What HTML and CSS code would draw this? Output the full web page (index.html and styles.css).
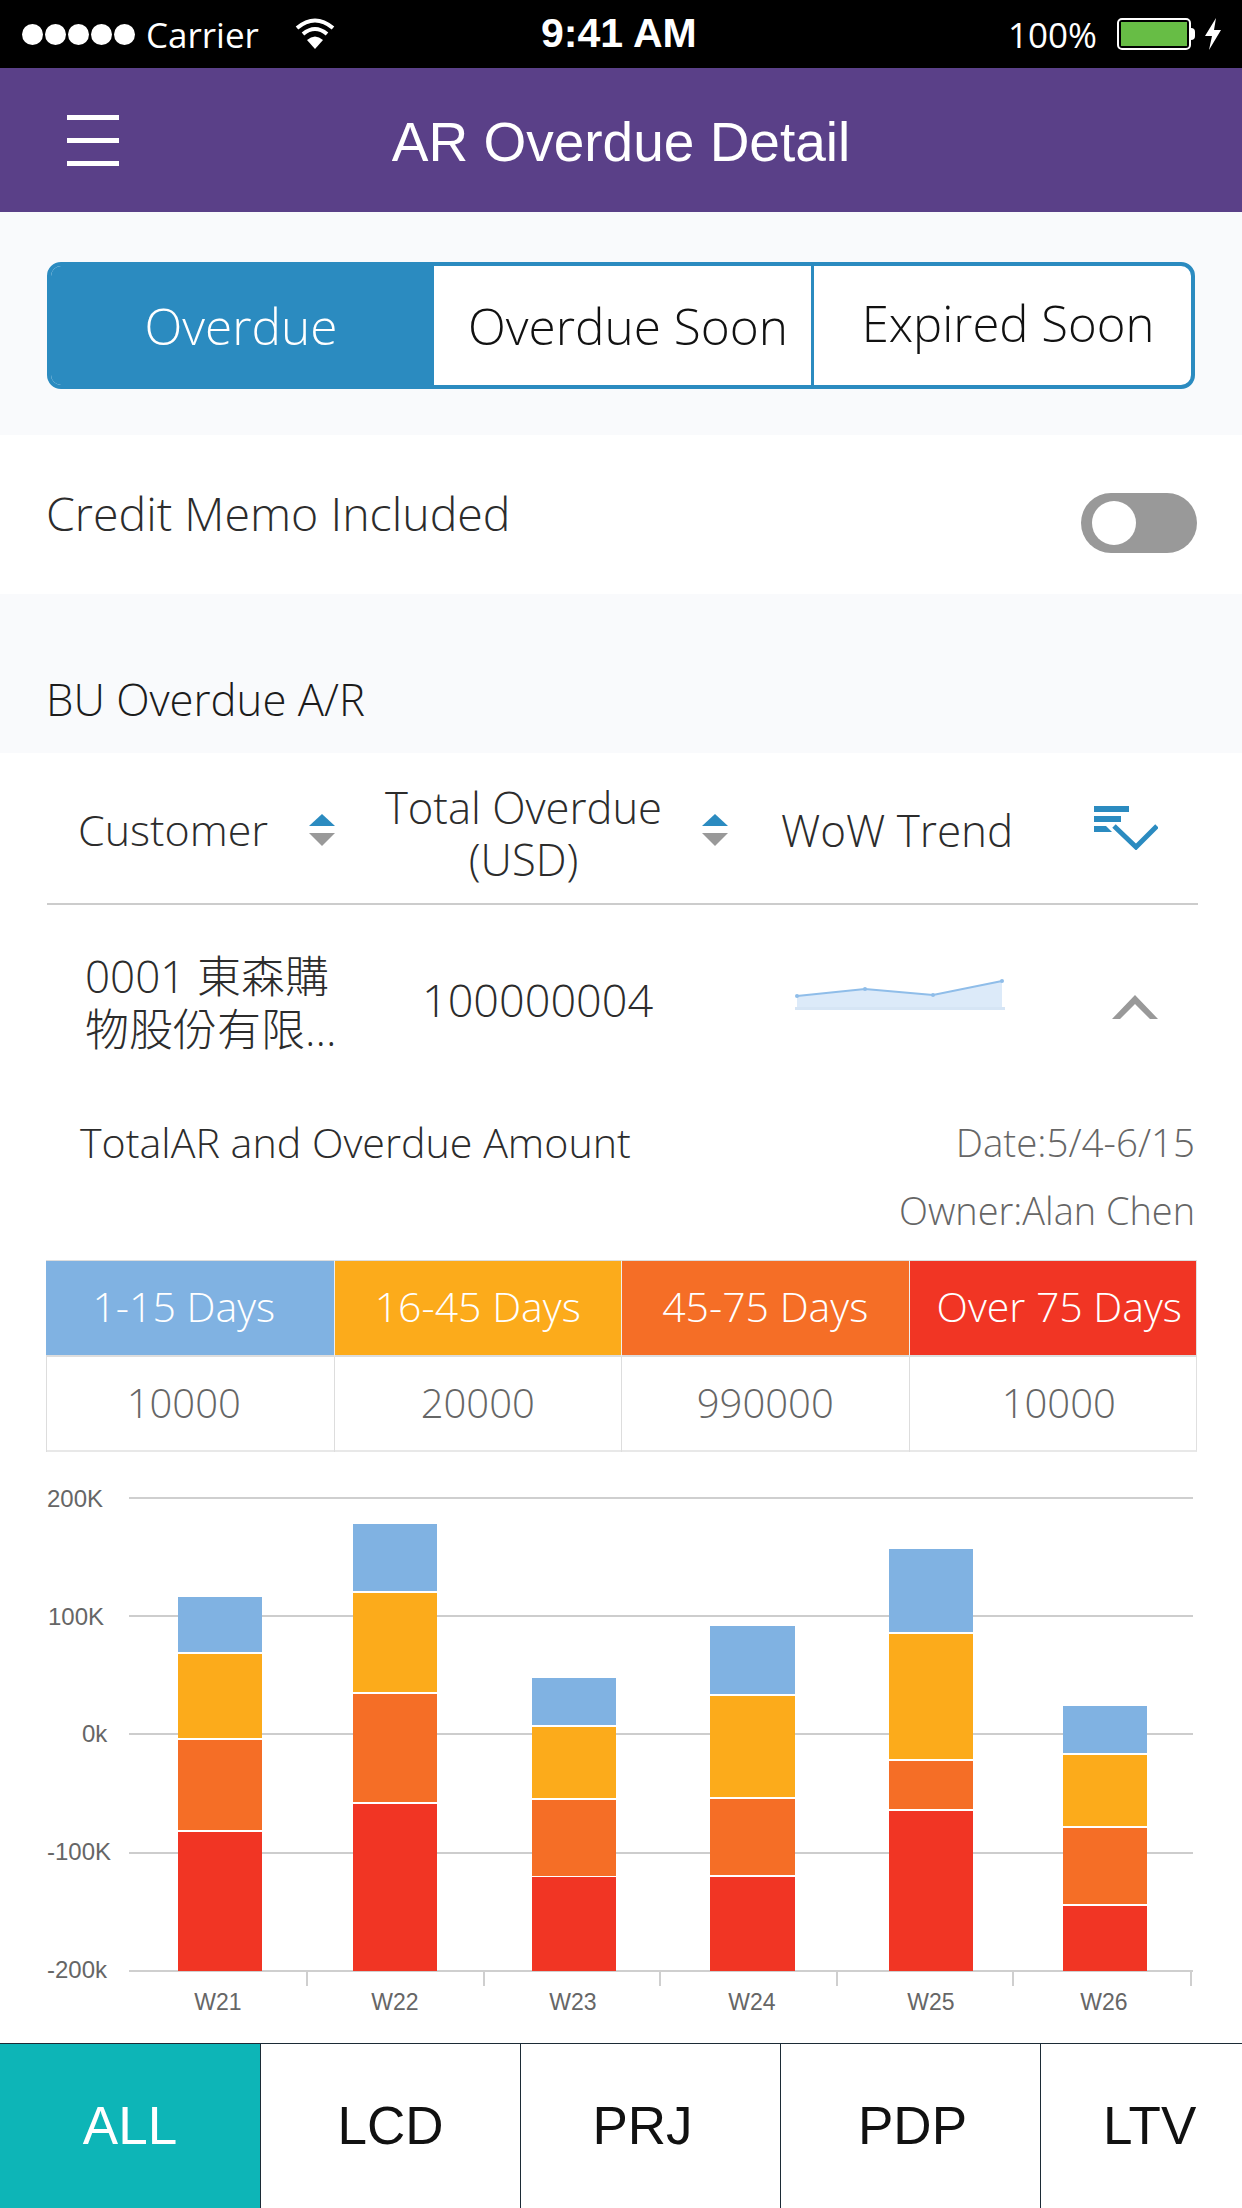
FILE: index.html
```html
<!DOCTYPE html>
<html lang="en">
<head>
  <meta charset="UTF-8">
  <title>AR Overdue Detail</title>
  <link rel="stylesheet" href="styles.css">
</head>
<body>
  <div class="page">
    <!-- status bar -->
    <div class="status">
      <div class="status-left">
        <span class="dots"><i></i><i></i><i></i><i></i><i></i></span>
        <span class="carrier">Carrier</span>
        <svg class="wifi" width="40" height="32" viewBox="0 0 40 32">
          <path d="M2 10 Q20 -5 38 10" fill="none" stroke="#fff" stroke-width="4"/>
          <path d="M8 16 Q20 6 32 16" fill="none" stroke="#fff" stroke-width="4"/>
          <path d="M20 31 L12 22 Q20 15 28 22 Z" fill="#fff"/>
        </svg>
      </div>
      <div class="clock">9:41 AM</div>
      <div class="status-right">
        <span class="pct">100%</span>
        <span class="battery"><b></b></span>
        <span class="nub"></span>
        <svg class="bolt" width="18" height="32" viewBox="0 0 18 32"><path d="M12 0 L1 18 H8 L5 32 L17 12 H10 Z" fill="#fff"/></svg>
      </div>
    </div>

    <!-- nav -->
    <header class="nav">
      <div class="burger"><i></i><i></i><i></i></div>
      <h1>AR Overdue Detail</h1>
    </header>

    <section class="seg-wrap">
      <div class="seg">
        <div class="seg-item active">Overdue</div>
        <div class="seg-item">Overdue Soon</div>
        <div class="seg-item expired">Expired Soon</div>
      </div>
    </section>

    <section class="memo">
      <span>Credit Memo Included</span>
      <div class="toggle"><i></i></div>
    </section>

    <section class="bu">BU Overdue A/R</section>

    <section class="list">
      <div class="thead">
        <div class="th th-customer">Customer</div>
        <svg class="sort" width="26" height="32" viewBox="0 0 26 32"><path d="M13 0 L26 12 H0 Z" fill="#2b8bc0"/><path d="M0 19 H26 L13 32 Z" fill="#999"/></svg>
        <div class="th th-total">Total Overdue<br>(USD)</div>
        <svg class="sort" width="26" height="32" viewBox="0 0 26 32"><path d="M13 0 L26 12 H0 Z" fill="#2b8bc0"/><path d="M0 19 H26 L13 32 Z" fill="#999"/></svg>
        <div class="th th-trend">WoW Trend</div>
        <svg class="sort-list" width="64" height="44" viewBox="0 0 64 44">
          <rect x="0" y="0" width="35" height="6" fill="#2b8bc0"/>
          <rect x="0" y="10" width="27" height="6" fill="#2b8bc0"/>
          <path d="M0 20 H12 L18 26 H0 Z" fill="#2b8bc0"/>
          <path d="M20 20 L42 41 L63 20" fill="none" stroke="#2b8bc0" stroke-width="5"/>
        </svg>
      </div>

      <div class="row">
        <div class="cust">0001 東森購<br>物股份有限...</div>
        <div class="amount">100000004</div>
        <svg class="spark" width="212" height="32" viewBox="795 980 212 32">
          <path d="M797 997 L865 990 L933 996 L1002 982 V1009 H797 Z" fill="#dceaf9"/>
          <path d="M797 997 L865 990 L933 996 L1002 982" fill="none" stroke="#8fbde9" stroke-width="2"/>
          <rect x="795" y="1008" width="210" height="3" fill="#d6e5f5"/>
          <circle cx="797" cy="997" r="2" fill="#8fbde9"/>
          <circle cx="865" cy="990" r="2" fill="#8fbde9"/>
          <circle cx="933" cy="996" r="2" fill="#8fbde9"/>
          <circle cx="1002" cy="982" r="2" fill="#8fbde9"/>
        </svg>
        <svg class="chev" width="46" height="24" viewBox="0 0 46 24"><path d="M0 24 L23 0 L46 24 H38 L23 9 L8 24 Z" fill="#999"/></svg>
      </div>

      <div class="summary">
        <div class="sum-title">TotalAR and Overdue Amount</div>
        <div class="sum-meta">
          <div class="date">Date:5/4-6/15</div>
          <div class="owner">Owner:Alan Chen</div>
        </div>
      </div>

      <div class="aging">
        <div class="ag-head c1">1-15 Days</div>
        <div class="ag-head c2">16-45 Days</div>
        <div class="ag-head c3">45-75 Days</div>
        <div class="ag-head c4">Over 75 Days</div>
        <div class="ag-val c1v">10000</div>
        <div class="ag-val">20000</div>
        <div class="ag-val">990000</div>
        <div class="ag-val c4v">10000</div>
      </div>

      <svg class="chart" width="1242" height="591" viewBox="0 1452 1242 591">
        <g stroke="#cfcfcf" stroke-width="2">
          <line x1="129" y1="1498" x2="1193" y2="1498"/>
          <line x1="129" y1="1971" x2="1193" y2="1971"/>
          <line x1="307" y1="1971" x2="307" y2="1986"/>
          <line x1="484" y1="1971" x2="484" y2="1986"/>
          <line x1="660" y1="1971" x2="660" y2="1986"/>
          <line x1="837" y1="1971" x2="837" y2="1986"/>
          <line x1="1013" y1="1971" x2="1013" y2="1986"/>
          <line x1="1191" y1="1971" x2="1191" y2="1986"/>
        </g>
        <g stroke="#bdbdbd" stroke-width="1.5">
          <line x1="129" y1="1616" x2="1193" y2="1616"/>
          <line x1="129" y1="1734" x2="1193" y2="1734"/>
          <line x1="129" y1="1853" x2="1193" y2="1853"/>
        </g>
        <g class="axis">
          <text x="47" y="1507">200K</text>
          <text x="48" y="1625">100K</text>
          <text x="82" y="1742">0k</text>
          <text x="47" y="1860">-100K</text>
          <text x="47" y="1978">-200k</text>
        </g>
        <g class="axis week">
          <text x="218" y="2010">W21</text>
          <text x="395" y="2010">W22</text>
          <text x="573" y="2010">W23</text>
          <text x="752" y="2010">W24</text>
          <text x="931" y="2010">W25</text>
          <text x="1104" y="2010">W26</text>
        </g>
        <!-- W21 -->
        <rect class="s1" x="178" y="1597" width="84" height="55"/>
        <rect class="s2" x="178" y="1654" width="84" height="84"/>
        <rect class="s3" x="178" y="1740" width="84" height="90"/>
        <rect class="s4" x="178" y="1832" width="84" height="139"/>
        <!-- W22 -->
        <rect class="s1" x="353" y="1524" width="84" height="67"/>
        <rect class="s2" x="353" y="1593" width="84" height="99"/>
        <rect class="s3" x="353" y="1694" width="84" height="108"/>
        <rect class="s4" x="353" y="1804" width="84" height="167"/>
        <!-- W23 -->
        <rect class="s1" x="532" y="1678" width="84" height="47"/>
        <rect class="s2" x="532" y="1727" width="84" height="71"/>
        <rect class="s3" x="532" y="1800" width="84" height="76"/>
        <rect class="s4" x="532" y="1877" width="84" height="94"/>
        <!-- W24 -->
        <rect class="s1" x="710" y="1626" width="85" height="68"/>
        <rect class="s2" x="710" y="1696" width="85" height="101"/>
        <rect class="s3" x="710" y="1799" width="85" height="76"/>
        <rect class="s4" x="710" y="1877" width="85" height="94"/>
        <!-- W25 -->
        <rect class="s1" x="889" y="1549" width="84" height="83"/>
        <rect class="s2" x="889" y="1634" width="84" height="125"/>
        <rect class="s3" x="889" y="1761" width="84" height="48"/>
        <rect class="s4" x="889" y="1811" width="84" height="160"/>
        <!-- W26 -->
        <rect class="s1" x="1063" y="1706" width="84" height="47"/>
        <rect class="s2" x="1063" y="1755" width="84" height="71"/>
        <rect class="s3" x="1063" y="1828" width="84" height="76"/>
        <rect class="s4" x="1063" y="1906" width="84" height="65"/>
      </svg>
    </section>

    <!-- bottom tabs -->
    <nav class="tabs">
      <div class="tab active">ALL</div>
      <div class="tab">LCD</div>
      <div class="tab prj">PRJ</div>
      <div class="tab pdp">PDP</div>
      <div class="tab last">LTV</div>
    </nav>
  </div>
</body>
</html>
```

FILE: styles.css
```css
:root {
  --blue: #2b8bc0;
  --text: #2c2c2c;
  --soft: #f9fafc;
  --c1: #80b2e2;
  --c2: #fcab1b;
  --c3: #f56e26;
  --c4: #f13524;
}
* {box-sizing: border-box;margin: 0;padding: 0;}
html,body {background: #fff;}
body {font-family: "Open Sans", "Noto Sans CJK TC", sans-serif;font-weight: 300;color: var(--text);}
.page {width: 1242px;height: 2208px;overflow: hidden;display: flex;flex-direction: column;}

/* status bar */
.status {height: 68px;flex: none;background: #000;color: #fff;display: flex;align-items: center;justify-content: space-between;padding: 0 20px 0 22px;position: relative;font-family: "Open Sans", sans-serif;font-weight: 400;font-size: 35px;}
.status-left,.status-right {display: flex;align-items: center;}
.dots {display: flex;gap: 2px;margin-right: 11px;}
.dots i {display: block;width: 21px;height: 21px;border-radius: 50%;background: #fff;}
.carrier {width: 149px;}
.wifi {display: block;}
.clock {position: absolute;left: 541px;top: 10px;font-family: "Liberation Sans", sans-serif;font-weight: 700;font-size: 41px;}
.pct {margin-right: 20px;}
.battery {display: block;width: 74px;height: 32px;border: 2px solid #fff;border-radius: 5px;padding: 2px;}
.battery b {display: block;height: 100%;background: #67bd45;}
.nub {display: block;width: 4px;height: 12px;background: #fff;border-radius: 0 4px 4px 0;margin-right: 9px;}
.bolt {display: block;}

/* nav */
.nav {height: 144px;flex: none;background: #5a4088;color: #fff;display: flex;align-items: center;position: relative;}
.burger {margin-left: 67px;width: 52px;display: flex;flex-direction: column;gap: 18px;}
.burger i {display: block;height: 5px;background: #fff;}
.nav h1 {position: absolute;left: 0;right: 0;text-align: center;padding-top: 4px;font-family: "Liberation Sans", sans-serif;font-weight: 400;font-size: 55px;}

/* segmented control */
.seg-wrap {height: 223px;flex: none;background: var(--soft);padding: 50px 47px 46px;}
.seg {display: flex;height: 127px;border: 4px solid var(--blue);border-radius: 14px;overflow: hidden;background: #fff;font-size: 49.5px;color: #111;}
.seg-item {display: flex;align-items: center;justify-content: center;width: 380px;padding-left: 11px;border-left: 3px solid var(--blue);}
.seg-item.active {width: 380px;padding-left: 0;background: var(--blue);color: #fff;border-left: 0;}
.seg-item.expired {flex: 1;padding-bottom: 6px;font-size: 49px;}

.memo {height: 159px;flex: none;display: flex;align-items: center;justify-content: space-between;padding: 0 45px 3px 46px;font-size: 46.5px;}
.toggle {width: 116px;height: 60px;border-radius: 30px;background: #999;padding: 8px 11px;margin-top: 19px;}
.toggle i {display: block;width: 44px;height: 44px;border-radius: 50%;background: #fff;}

.bu {height: 159px;flex: none;background: var(--soft);padding: 77px 0 0 46px;font-size: 43.7px;line-height: 56px;color: #1c1c1c;}

.list {flex: 1;display: flex;flex-direction: column;}
.thead {height: 152px;flex: none;margin: 0 44px 0 47px;border-bottom: 2px solid #ccc;display: flex;align-items: center;position: relative;}
.th {font-size: 44px;line-height: 52px;padding-top: 3px;}
.th-customer {margin-left: 31px;width: 231px;font-size: 43px;}
.th-total {margin-left: 10px;width: 357px;text-align: center;font-size: 43.6px;padding-top: 10px;}
.th-trend {margin-left: 53px;width: 313px;}
.sort {display: block;margin-top: 4px;}
.sort-list {display: block;margin-top: -1px;}

.row {height: 173px;flex: none;position: relative;display: flex;align-items: flex-start;}
.cust {margin: 45px 0 0 85px;width: 260px;font-size: 44px;line-height: 53px;}
.amount {margin: 64px 0 0 77px;width: 260px;font-size: 45px;line-height: 62px;}
.spark {display: block;margin: 74px 0 0 113px;}
.chev {display: block;margin: 90px 0 0 105px;}

.summary {height: 182px;flex: none;display: flex;justify-content: space-between;padding: 0 47px 0 80px;}
.sum-title {font-size: 41.2px;line-height: 68px;margin-top: 30px;}
.sum-meta {line-height: 68px;color: #666;text-align: right;margin-top: 30px;}
.date {font-size: 38.5px;}
.owner {font-size: 37.9px;}

.aging {flex: none;margin: 0 45px 0 46px;height: 192px;display: grid;grid-template-columns: repeat(4,1fr);grid-template-rows: 97px 95px;border-bottom: 2px solid #e8e8e8;border-right: 1px solid #e0e0e0;}
.ag-head {display: flex;align-items: center;justify-content: center;color: #fff;font-size: 41px;padding-bottom: 5px;border-top: 1px solid #ddd;border-bottom: 2px solid #ddd;}
.c1 {background: var(--c1);padding-right: 12px;}
.c2 {background: var(--c2);border-left: 1px solid #eee;}
.c3 {background: var(--c3);border-left: 1px solid #eee;}
.c4 {background: var(--c4);border-left: 1px solid #eee;padding-left: 13px;}
.ag-val {display: flex;align-items: center;justify-content: center;color: #666;font-size: 40px;padding-bottom: 4px;border-left: 1px solid #ddd;}
.c1v {padding-right: 13px;}
.c4v {padding-left: 12px;}

.chart {display: block;flex: none;}
.axis text {font-family: "Liberation Sans", sans-serif;font-weight: 400;font-size: 24px;fill: #666;}
.week text {font-size: 23px;text-anchor: middle;}
.s1 {fill: var(--c1);}
.s2 {fill: var(--c2);}
.s3 {fill: var(--c3);}
.s4 {fill: var(--c4);}

/* bottom tabs */
.tabs {height: 165px;flex: none;display: flex;border-top: 1px solid #1c2b36;font-family: "Liberation Sans", sans-serif;font-weight: 400;font-size: 53px;color: #111;background: #fff;}
.tab {width: 260px;display: flex;justify-content: center;padding-top: 51px;border-right: 1px solid #1c2b36;}
.tab.active {background: #0db5b7;color: #fff;width: 261px;}
.tab.prj {padding-right: 16px;}
.tab.pdp {padding-left: 4px;}
.tab.last {flex: 1;border-right: 0;justify-content: flex-start;padding-left: 62px;}
```
